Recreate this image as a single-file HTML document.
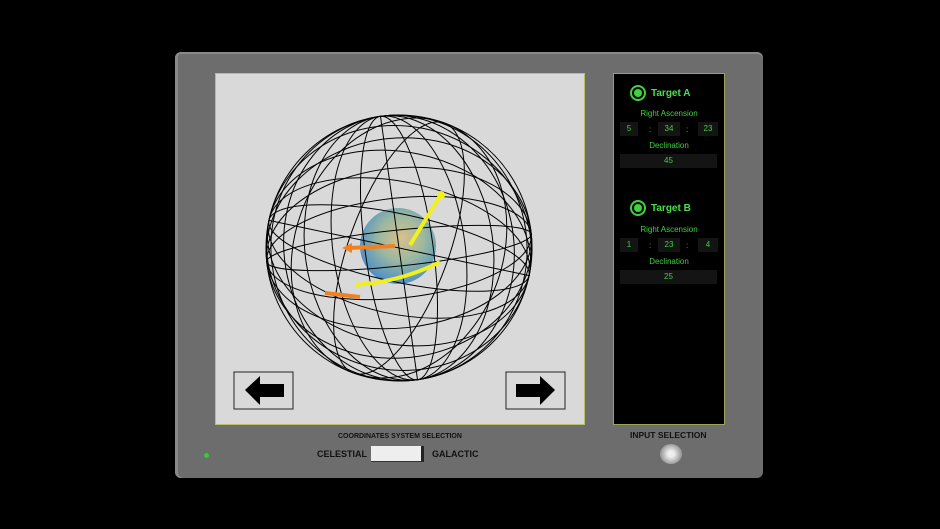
<!DOCTYPE html>
<html><head><meta charset="utf-8"><style>
body{margin:0;width:940px;height:529px;background:#000;overflow:hidden;position:relative;font-family:"Liberation Sans",sans-serif}
.panel{position:absolute;left:175px;top:52px;width:588px;height:426px;background:#6d6d6d;border-radius:6px;box-shadow:inset 3px 0 0 #8a8a8a,inset 0 2px 0 #888}
.screen{position:absolute;left:215px;top:73px;width:368px;height:350px;background:#d9d9d9;border:1px solid #b9c06a}
.side{position:absolute;left:613px;top:73px;width:110px;height:350px;background:#000;border:1px solid #9ea35a}
.t{position:absolute;color:#3fd23f;font-size:8px;text-align:center}
.box{position:absolute;background:#141414;color:#3fd23f;font-size:8px;text-align:center;line-height:14px;height:14px}
.radio{position:absolute;width:12px;height:12px;border:2px solid #3fd23f;border-radius:50%}
.radio:after{content:"";position:absolute;left:2px;top:2px;width:8px;height:8px;border-radius:50%;background:#3fd23f}
.lbl{position:absolute;color:#4be04b;font-weight:bold;font-size:10px}
.arr{position:absolute;width:58px;height:36px;border:1px solid #222;background:#d9d9d9}
.blk{position:absolute;font-weight:bold;color:#111}
</style></head><body>
<div class="panel"></div>
<div class="screen"></div>
<svg style="position:absolute;left:0;top:0" width="940" height="529">
<defs><radialGradient id="e" cx="55%" cy="40%" r="60%"><stop offset="0" stop-color="#d9c08a"/><stop offset="0.5" stop-color="#9bb8a0"/><stop offset="1" stop-color="#4f8fc8"/></radialGradient></defs>
<circle cx="398" cy="246" r="38" fill="url(#e)"/>
<g fill="none" stroke="#000" stroke-width="1">
<g transform="rotate(-8 399 248)">
<ellipse cx="399" cy="248" rx="133" ry="133"/>
<ellipse cx="399" cy="248" rx="128" ry="133"/>
<ellipse cx="399" cy="248" rx="115" ry="133"/>
<ellipse cx="399" cy="248" rx="94" ry="133"/>
<ellipse cx="399" cy="248" rx="66" ry="133"/>
<ellipse cx="399" cy="248" rx="34" ry="133"/>
<line x1="399" y1="115" x2="399" y2="381"/>
</g>
<g transform="rotate(12 399 248)">
<ellipse cx="399" cy="248" rx="133" ry="122"/>
<ellipse cx="399" cy="248" rx="133" ry="96"/>
<ellipse cx="399" cy="248" rx="133" ry="66"/>
<ellipse cx="399" cy="248" rx="133" ry="34"/>
<line x1="266" y1="248" x2="532" y2="248"/>
</g>
<g transform="rotate(-6 399 248)">
<ellipse cx="399" cy="248" rx="133" ry="110"/>
<ellipse cx="399" cy="248" rx="133" ry="80"/>
<ellipse cx="399" cy="248" rx="133" ry="50"/>
<ellipse cx="399" cy="248" rx="133" ry="18"/>
</g>
<g transform="rotate(20 399 248)">
<ellipse cx="399" cy="248" rx="104" ry="133"/>
<ellipse cx="399" cy="248" rx="50" ry="133"/>
</g>
</g>
<path d="M355 285 Q400 282 440 262" stroke="#f0f020" stroke-width="4" fill="none"/>
<line x1="410" y1="245" x2="440" y2="196" stroke="#f0f020" stroke-width="4"/>
<circle cx="441" cy="195" r="4" fill="#f0f020"/>
<line x1="348" y1="248" x2="395" y2="246" stroke="#f08020" stroke-width="4"/>
<polygon points="342,248 352,243 352,253" fill="#f08020"/>
<line x1="325" y1="293" x2="360" y2="297" stroke="#f08020" stroke-width="4"/>
<rect x="234" y="372" width="59" height="37" fill="none" stroke="#222"/>
<polygon points="245,390 260,376 260,384 284,384 284,397 260,397 260,405" fill="#000"/>
<rect x="506" y="372" width="59" height="37" fill="none" stroke="#222"/>
<polygon points="555,390 540,376 540,384 516,384 516,397 540,397 540,405" fill="#000"/>
</svg>
<div class="side"></div>
<div class="radio" style="left:630px;top:85px"></div><div class="lbl" style="left:651px;top:88px">Target A</div>
<div class="t" style="left:613px;top:109px;width:112px">Right Ascension</div>
<div class="box" style="left:620px;top:122px;width:18px">5</div><div class="t" style="left:649px;top:125px">:</div>
<div class="box" style="left:658px;top:122px;width:22px">34</div><div class="t" style="left:686px;top:125px">:</div>
<div class="box" style="left:698px;top:122px;width:20px">23</div>
<div class="t" style="left:613px;top:141px;width:112px">Declination</div>
<div class="box" style="left:620px;top:154px;width:97px">45</div>
<div class="radio" style="left:630px;top:200px"></div><div class="lbl" style="left:651px;top:203px">Target B</div>
<div class="t" style="left:613px;top:225px;width:112px">Right Ascension</div>
<div class="box" style="left:620px;top:238px;width:18px">1</div><div class="t" style="left:649px;top:241px">:</div>
<div class="box" style="left:658px;top:238px;width:22px">23</div><div class="t" style="left:686px;top:241px">:</div>
<div class="box" style="left:698px;top:238px;width:20px">4</div>
<div class="t" style="left:613px;top:257px;width:112px">Declination</div>
<div class="box" style="left:620px;top:270px;width:97px">25</div>
<div class="blk" style="left:338px;top:433px;font-size:7px">COORDINATES SYSTEM SELECTION</div>
<div class="blk" style="left:317px;top:449px;font-size:9px">CELESTIAL</div>
<div style="position:absolute;left:371px;top:446px;width:50px;height:15px;background:#eee;border-right:3px solid #222;border-bottom:1px solid #333"></div>
<div class="blk" style="left:432px;top:449px;font-size:9px">GALACTIC</div>
<div class="blk" style="left:630px;top:430px;font-size:8.5px">INPUT SELECTION</div>
<div style="position:absolute;left:660px;top:444px;width:22px;height:20px;border-radius:50%;background:radial-gradient(circle,#eee 20%,#999 70%)"></div>
<div style="position:absolute;left:204px;top:453px;width:5px;height:5px;border-radius:50%;background:#3c3"></div>
</body></html>
